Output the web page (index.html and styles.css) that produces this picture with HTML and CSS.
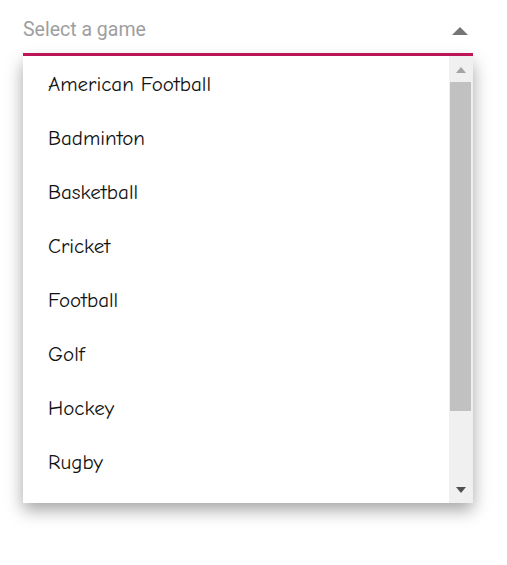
FILE: index.html
```html
<!DOCTYPE html>
<html>
<head>
<meta charset="utf-8">
<link rel="stylesheet" href="styles.css">
</head>
<body>
<div class="combo">
  <div class="field">
    <span class="placeholder">Select a game</span>
    <span class="caret"></span>
  </div>
  <div class="popup">
    <ul class="list">
      <li>American Football</li>
      <li>Badminton</li>
      <li>Basketball</li>
      <li>Cricket</li>
      <li>Football</li>
      <li>Golf</li>
      <li>Hockey</li>
      <li>Rugby</li>
    </ul>
    <div class="scrollbar">
      <span class="sb-up"></span>
      <div class="sb-track"><div class="sb-thumb"></div></div>
      <span class="sb-down"></span>
    </div>
  </div>
</div>
</body>
</html>
```

FILE: styles.css
```css
html, body {
  margin: 0;
  padding: 0;
  background: #fff;
}
body {
  min-height: 565px;
}
.combo {
  width: 450px;
  margin: 0 0 0 23px;
  padding: 16px 0 50px;
}
.field {
  display: flex;
  align-items: center;
  justify-content: space-between;
  box-sizing: border-box;
  height: 40px;
  border-bottom: 3px solid #c6175b;
  padding-bottom: 10px;
}
.placeholder {
  font-family: Roboto, sans-serif;
  font-size: 19.5px;
  color: #9e9e9e;
  line-height: 27px;
}
.caret {
  width: 0;
  height: 0;
  border-left: 8.5px solid transparent;
  border-right: 8.5px solid transparent;
  border-bottom: 8px solid #757575;
  margin-right: 5px;
  margin-top: 3px;
}
.popup {
  display: flex;
  height: 447px;
  background: #fff;
  box-shadow: 0 7px 16px rgba(0, 0, 0, 0.36);
  overflow: hidden;
}
.list {
  flex: 1;
  list-style: none;
  margin: 0;
  padding: 1px 0 0;
  overflow: hidden;
}
.list li {
  height: 54px;
  line-height: 54px;
  padding-left: 25px;
  font-family: "Comic Sans MS", "Comic Neue", cursive;
  font-size: 21px;
  font-weight: 500;
  color: #111;
  white-space: nowrap;
}
.scrollbar {
  width: 24px;
  background: #f0f0f0;
  display: flex;
  flex-direction: column;
  align-items: center;
}
.sb-up, .sb-down {
  width: 0;
  height: 0;
  border-left: 5.5px solid transparent;
  border-right: 5.5px solid transparent;
}
.sb-up {
  border-bottom: 6px solid #a3a3a3;
  margin: 11px 0 9px;
}
.sb-down {
  border-top: 6px solid #505050;
  margin: 0 0 10px;
}
.sb-track {
  flex: 1;
  width: 100%;
  padding: 0 2px 0 1px;
  box-sizing: border-box;
}
.sb-thumb {
  height: 329px;
  background: #c1c1c1;
}
```
